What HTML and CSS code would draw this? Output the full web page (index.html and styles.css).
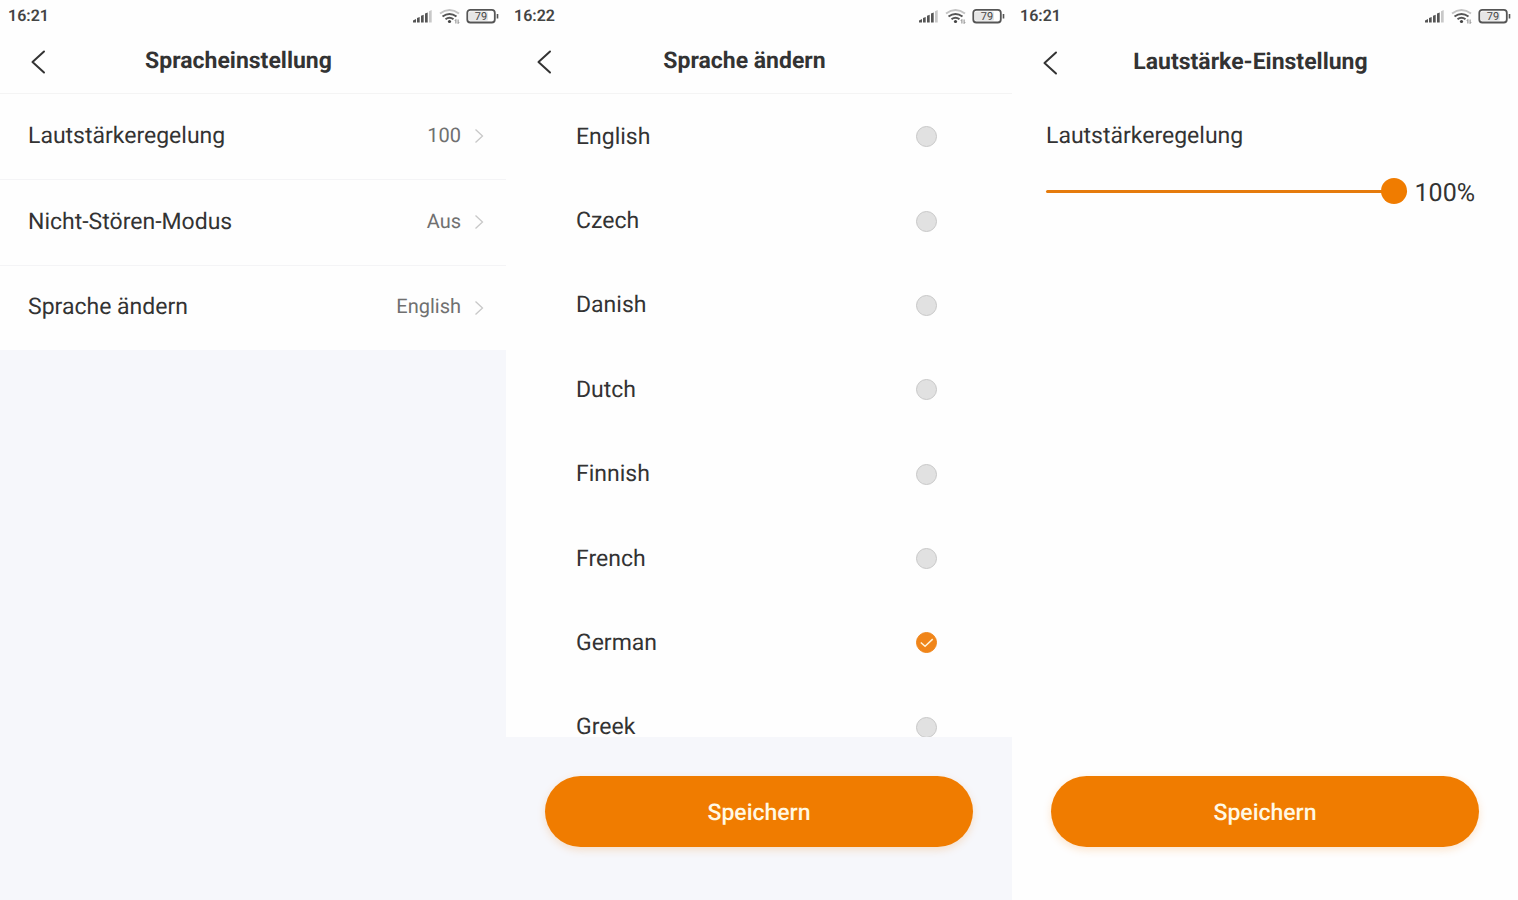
FILE: index.html
```html
<!DOCTYPE html>
<html lang="de">
<head>
<meta charset="utf-8">
<title>Spracheinstellung</title>
<link rel="stylesheet" href="styles.css">
</head>
<body>
<svg class="defs" aria-hidden="true">
  <symbol id="status-icons" viewBox="0 0 86 16">
    <g fill="#555">
      <path d="M0 14.500v-2l3-1.500v3.500zM4 14.500V10l2.700-1v5.500zM8 14.500V7.700l2.700-1v7.800zM12 14.500V5.500l2.700-1v10z"/>
      <path d="M16 14.500V3.200l2.700-1.200v12.500z" fill="#c8c8c8"/>
    </g>
    <g fill="none" stroke-width="2">
      <path d="M27 5.500q9.500-7 19 0" stroke="#c4c4c4"/>
      <path d="M29.500 8.500q7-5 14 0M32.500 11.200q4-3 8 0" stroke="#555"/>
      <path d="M42.900 15.500v-4l-1 1.200M45.100 11.500v4l1-1.200" stroke="#888" stroke-width="1"/>
    </g>
    <circle cx="36.500" cy="13.500" r="1.600" fill="#444"/>
    <rect x="54.300" y="1.800" width="27.500" height="12.700" rx="3" fill="#fff" stroke="#555" stroke-width="1.800"/>
    <rect x="56" y="3.500" width="19" height="9.300" rx="1.500" fill="#e6e6e6"/>
    <path d="M84.500 6v4.500" stroke="#555" stroke-width="1.600"/>
  </symbol>
  <symbol id="back" viewBox="0 0 16 24"><path d="M14 1.500 2.500 12 14 22.500" fill="none" stroke="#333" stroke-width="2" stroke-linecap="round" stroke-linejoin="round"/></symbol>
  <symbol id="next" viewBox="0 0 10 16"><path d="M1.500 1.500 8.500 8 1.500 14.500" fill="none" stroke="#c8c8c8" stroke-width="1.300"/></symbol>
  <symbol id="tick" viewBox="0 0 22 22"><path d="M5 11 9.500 15 17.500 7.500" fill="none" stroke="#fff3d8" stroke-width="1.600"/></symbol>
</svg>
<main class="screens">
  <section class="screen">
    <div class="status"><span>16:21</span><svg class="status-icons" viewBox="0 0 86 16"><use href="#status-icons"/><text x="68" y="12" class="battery-text">79</text></svg></div>
    <header class="header">
      <button class="back" type="button" aria-label="Zurück"><svg><use href="#back"/></svg></button>
      <h1 class="title">Spracheinstellung</h1>
    </header>
    <nav class="settings">
      <a class="setting" href="#lautstaerke"><span>Lautstärkeregelung</span><span class="value">100</span><svg class="next"><use href="#next"/></svg></a>
      <a class="setting" href="#ruhe"><span>Nicht-Stören-Modus</span><span class="value">Aus</span><svg class="next"><use href="#next"/></svg></a>
      <a class="setting" href="#sprache"><span>Sprache ändern</span><span class="value">English</span><svg class="next"><use href="#next"/></svg></a>
    </nav>
  </section>

  <section class="screen" id="sprache">
    <div class="status"><span>16:22</span><svg class="status-icons" viewBox="0 0 86 16"><use href="#status-icons"/><text x="68" y="12" class="battery-text">79</text></svg></div>
    <header class="header">
      <button class="back" type="button" aria-label="Zurück"><svg><use href="#back"/></svg></button>
      <h1 class="title">Sprache ändern</h1>
    </header>
    <div class="languages">
      <div class="language-list">
        <label class="language"><span>English</span><input type="radio" name="language"></label>
        <label class="language"><span>Czech</span><input type="radio" name="language"></label>
        <label class="language"><span>Danish</span><input type="radio" name="language"></label>
        <label class="language"><span>Dutch</span><input type="radio" name="language"></label>
        <label class="language"><span>Finnish</span><input type="radio" name="language"></label>
        <label class="language"><span>French</span><input type="radio" name="language"></label>
        <label class="language"><span>German</span><input type="radio" name="language" checked><svg class="tick"><use href="#tick"/></svg></label>
        <label class="language"><span>Greek</span><input type="radio" name="language"></label>
      </div>
    </div>
    <footer class="footer"><button class="save" type="button">Speichern</button></footer>
  </section>

  <section class="screen screen-volume" id="lautstaerke">
    <div class="status"><span>16:21</span><svg class="status-icons" viewBox="0 0 86 16"><use href="#status-icons"/><text x="68" y="12" class="battery-text">79</text></svg></div>
    <header class="header header-volume">
      <button class="back" type="button" aria-label="Zurück"><svg><use href="#back"/></svg></button>
      <h1 class="title">Lautstärke-Einstellung</h1>
    </header>
    <div class="volume">
      <label for="volume">Lautstärkeregelung</label>
      <div class="slider-row">
        <input class="slider" id="volume" type="range" min="0" max="100" value="100">
        <output class="percent" for="volume">100%</output>
      </div>
    </div>
    <footer class="footer"><button class="save" type="button">Speichern</button></footer>
  </section>
</main>
</body>
</html>
```
FILE: styles.css
```css
* {
  box-sizing: border-box;
}

body {
  margin: 0;
  background: #fff;
  color: #333;
  font-family: Roboto, "Liberation Sans", sans-serif;
  font-size: 23px;
  line-height: 28px;
  text-rendering: geometricPrecision;
}

.defs {
  position: absolute;
  width: 0;
  height: 0;
}

.screens {
  display: grid;
  grid-template-columns: repeat(3, 1fr);
  min-height: 100vh;
}

.screen {
  display: flex;
  flex-direction: column;
  background: #f6f7fb;
}

.screen-volume {
  background: #fefefe;
}

.status {
  display: flex;
  align-items: center;
  justify-content: space-between;
  height: 32px;
  padding: 0 7px 0 8px;
  background: #fefefe;
  color: #444;
  font-size: 16px;
  font-weight: 600;
}

.status-icons {
  width: 86px;
  height: 16px;
}

.battery-text {
  fill: #444;
  font-size: 11px;
  font-weight: 400;
  text-anchor: middle;
}

.header {
  display: grid;
  grid-template-columns: 16px 1fr 16px;
  align-items: center;
  height: 62px;
  padding: 0 59px 4px 30px;
  border-bottom: 1px solid #f4f4f4;
  background: #fefefe;
}

.header-volume {
  padding-bottom: 2px;
  border-bottom: 0;
}

.back {
  width: 16px;
  height: 24px;
  margin-top: 2px;
  padding: 0;
  border: 0;
  background: none;
}

.back svg {
  display: block;
  width: 16px;
  height: 24px;
}

.title {
  margin: 0;
  font-size: 23px;
  font-weight: 700;
  text-align: center;
}

.setting {
  display: flex;
  align-items: center;
  height: 86px;
  padding: 0 22px 2px 28px;
  border-bottom: 1px solid #f4f4f6;
  background: #fefefe;
  color: inherit;
  text-decoration: none;
}

.setting:last-child {
  height: 84px;
  border-bottom: 0;
}

.value {
  margin: 0 0 2px auto;
  color: #707070;
  font-size: 20px;
}

.next {
  width: 10px;
  height: 16px;
  margin: 1px 0 0 13px;
}

.languages {
  flex: 1 1 0;
  display: grid;
  min-height: 0;
  overflow: hidden;
  background: #fefefe;
}

.language-list {
  display: grid;
  grid-template-rows: repeat(8, 1fr);
  margin-bottom: -32px;
}

.language {
  position: relative;
  display: flex;
  align-items: center;
  justify-content: space-between;
  padding: 1px 75px 0 70px;
}

.language input {
  appearance: none;
  width: 21px;
  height: 21px;
  margin: 0;
  border: 1px solid #c8c8c8;
  border-radius: 50%;
  background: #e1e1e1;
}

.language input:checked {
  border-color: #f08519;
  background: #f08519;
}

.tick {
  position: absolute;
  top: calc(50% - 10px);
  right: 75px;
  width: 21px;
  height: 21px;
  pointer-events: none;
}

.volume {
  flex: 1;
  padding: 28px 43px 0 34px;
}

.slider-row {
  display: flex;
  align-items: center;
  gap: 8px;
  margin-top: 28px;
}

.slider {
  appearance: none;
  flex: 1;
  min-width: 0;
  height: 26px;
  margin: 0 0 3px;
  background: none;
}

.slider::-webkit-slider-runnable-track {
  height: 3px;
  border-radius: 2px;
  background: #e57b0c;
}

.slider::-webkit-slider-thumb {
  appearance: none;
  width: 26px;
  height: 26px;
  margin-top: -12px;
  border-radius: 50%;
  background: #f07c00;
}

.percent {
  padding-top: 2px;
  font-size: 25px;
}

.footer {
  padding: 39px 39px 53px;
}

.save {
  display: block;
  width: 100%;
  height: 71px;
  padding: 2px 0 0;
  border: 0;
  border-radius: 36px;
  background: #f07c00;
  box-shadow: 0 3px 8px #f07c0033;
  color: #fff8e4;
  font: 500 23px/28px Roboto, "Liberation Sans", sans-serif;
  text-rendering: inherit;
}
```
